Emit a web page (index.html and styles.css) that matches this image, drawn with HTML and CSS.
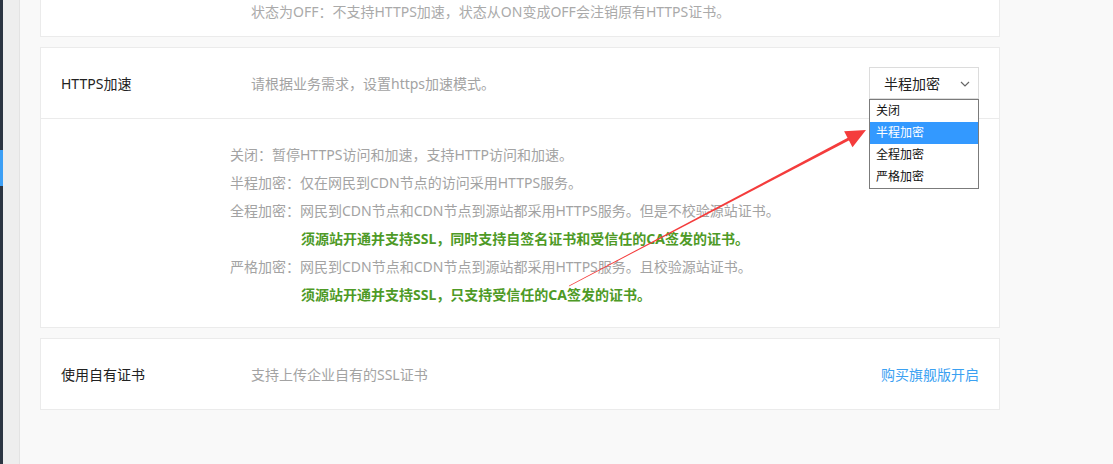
FILE: index.html
```html
<!DOCTYPE html>
<html lang="zh-CN">
<head>
<meta charset="utf-8">
<title>HTTPS加速</title>
<link rel="stylesheet" href="styles.css">
</head>
<body>
<div class="layout">
  <div class="sidebar"><div class="sidebar-active"></div></div>
  <div class="subnav"></div>
  <main class="main">
    <section class="card card-top">
      <p class="muted top-note">状态为OFF：不支持HTTPS加速，状态从ON变成OFF会注销原有HTTPS证书。</p>
    </section>

    <section class="card">
      <div class="row">
        <div class="label">HTTPS加速</div>
        <div class="desc">请根据业务需求，设置https加速模式。</div>
        <div class="select-wrap">
          <div class="select">
            <span>半程加密</span>
            <svg class="chev" width="10" height="6" viewBox="0 0 10 6"><path d="M1 1 L5 5 L9 1" fill="none" stroke="#666" stroke-width="1.2"/></svg>
          </div>
          <ul class="options">
            <li>关闭</li>
            <li class="selected">半程加密</li>
            <li>全程加密</li>
            <li>严格加密</li>
          </ul>
        </div>
      </div>
      <div class="detail">
        <p>关闭：暂停HTTPS访问和加速，支持HTTP访问和加速。</p>
        <p>半程加密：仅在网民到CDN节点的访问采用HTTPS服务。</p>
        <p>全程加密：网民到CDN节点和CDN节点到源站都采用HTTPS服务。但是不校验源站证书。</p>
        <p class="green">须源站开通并支持SSL，同时支持自签名证书和受信任的CA签发的证书。</p>
        <p>严格加密：网民到CDN节点和CDN节点到源站都采用HTTPS服务。且校验源站证书。</p>
        <p class="green">须源站开通并支持SSL，只支持受信任的CA签发的证书。</p>
      </div>
    </section>

    <section class="card">
      <div class="row">
        <div class="label">使用自有证书</div>
        <div class="desc">支持上传企业自有的SSL证书</div>
        <a class="link" href="#">购买旗舰版开启</a>
      </div>
    </section>
  </main>
</div>
<svg class="arrow" width="1113" height="464" viewBox="0 0 1113 464">
  <polygon points="569.2,285.6 568.8,286.4 849.3,140.2 851.1,136.0" fill="#f43c3c"/>
  <polygon points="866,130 852.5,147.3 844.1,131.3" fill="#f43c3c"/>
</svg>
</body>
</html>
```

FILE: styles.css
```css
* { box-sizing: border-box; }
html, body { margin: 0; padding: 0; }
body {
  font-family: "Noto Sans", "Noto Sans CJK SC", sans-serif;
  background: #f9f9f9;
  width: 1113px;
  height: 464px;
  overflow: hidden;
  position: relative;
}
p { margin: 0; }

.layout { display: flex; height: 464px; }

.sidebar {
  width: 3px;
  background: #2c3542;
  padding-top: 150px;
  flex: none;
}
.sidebar-active { height: 36px; background: #3d9ff5; }

.subnav {
  width: 17px;
  flex: none;
  background: #eeeeee;
  border-right: 1px solid #e3e3e3;
}

.main {
  width: 980px;
  padding-left: 20px;
  display: flex;
  flex-direction: column;
  gap: 10px;
}

.card {
  width: 960px;
  background: #fff;
  border: 1px solid #ebebeb;
}
.card-top {
  border-top: none;
  padding: 3px 0 15px 210px;
}
.top-note {
  font-size: 14px;
  line-height: 18px;
  color: #aaa;
}

.row {
  height: 70px;
  display: flex;
  align-items: center;
  padding: 0 20px;
}
.label {
  width: 190px;
  font-size: 14px;
  color: #222;
  flex: none;
}
.desc {
  flex: 1;
  font-size: 14px;
  color: #a3a3a3;
}
.link {
  font-size: 14px;
  color: #3ba1f2;
  text-decoration: none;
}

.select-wrap { position: relative; }
.select {
  width: 110px;
  height: 32px;
  border: 1px solid #dcdcdc;
  display: flex;
  align-items: center;
  justify-content: space-between;
  padding: 0 8px 0 14px;
  font-size: 14px;
  color: #222;
}
.chev { margin-top: 1px; }
.options {
  position: absolute;
  top: 32px;
  left: 0;
  width: 110px;
  margin: 0;
  padding: 0;
  list-style: none;
  background: #fff;
  border: 1px solid #7b7b7b;
  font-size: 12px;
  color: #111;
  z-index: 2;
}
.options li {
  height: 22px;
  line-height: 22px;
  padding-left: 6px;
}
.options li.selected { background: #3399ff; color: #fff; }

.detail {
  border-top: 1px solid #ebebeb;
  padding: 22px 0 18px 189px;
  font-size: 14px;
  line-height: 28px;
  color: #a3a3a3;
}
.detail .green {
  color: #4e9a26;
  font-weight: bold;
  padding-left: 71px;
}

.arrow {
  position: absolute;
  left: 0;
  top: 0;
  pointer-events: none;
  z-index: 5;
}
```
